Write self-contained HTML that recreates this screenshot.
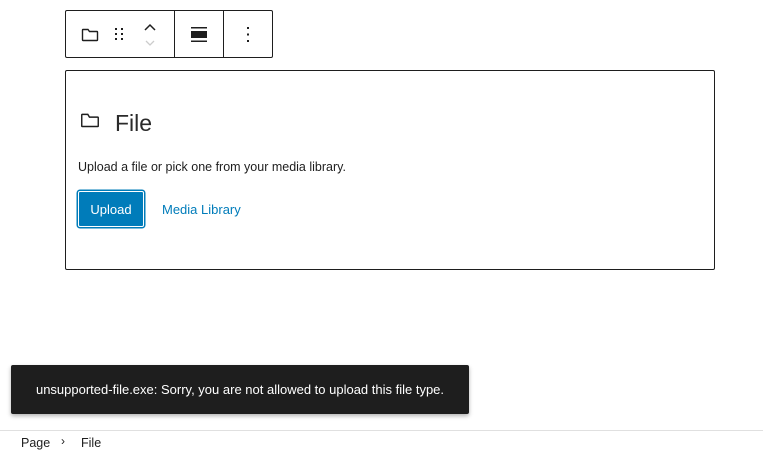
<!DOCTYPE html>
<html><head><style>
body{margin:0;width:763px;height:455px;background:#fff;font-family:"Liberation Sans",sans-serif;position:relative;overflow:hidden;color:#1e1e1e}
.tb{position:absolute;left:65px;top:10px;width:206px;height:46px;border:1px solid #1e1e1e;border-radius:2px;box-sizing:content-box}
.dv{position:absolute;top:0;width:1px;height:46px;background:#1e1e1e}
.blk{position:absolute;left:65px;top:70px;width:648px;height:198px;border:1px solid #1e1e1e;border-radius:2px}
.snack{position:absolute;left:11px;top:365px;width:458px;height:49px;background:#1e1e1e;border-radius:2px;color:#fff;font-size:13px;line-height:49px;text-align:center;box-shadow:0 2px 4px rgba(0,0,0,.3)}
.foot{position:absolute;left:0;top:430px;width:763px;border-top:1px solid #e0e0e0;height:25px}
</style></head><body>
<div class="tb">
<svg style="position:absolute;left:14px;top:14px" width="20" height="20" viewBox="0 0 20 20"><path d="M2.5 5.5v9.5a.5.5 0 0 0 .5.5h14a.5.5 0 0 0 .5-.5V7a.5.5 0 0 0-.5-.5H9.5L8 4.5H3a.5.5 0 0 0-.5.5z" fill="none" stroke="#1e1e1e" stroke-width="1.4"/></svg>
<svg style="position:absolute;left:48px;top:16px" width="12" height="14"><g fill="#1e1e1e"><rect x="1" y="1" width="2" height="2"/><rect x="7" y="1" width="2" height="2"/><rect x="1" y="6" width="2" height="2"/><rect x="7" y="6" width="2" height="2"/><rect x="1" y="11" width="2" height="2"/><rect x="7" y="11" width="2" height="2"/></g></svg>
<svg style="position:absolute;left:77px;top:11px" width="14" height="26"><path d="M2 8l5-5 5 5" fill="none" stroke="#1e1e1e" stroke-width="1.5"/><path d="M3 19l4 4 4-4" fill="none" stroke="#ccc" stroke-width="1.3"/></svg>
<div class="dv" style="left:108px"></div>
<svg style="position:absolute;left:125px;top:15px" width="16" height="18"><rect x="0" y="1" width="16" height="1.5" fill="#1e1e1e"/><rect x="0" y="5" width="16" height="7" fill="#1e1e1e"/><rect x="0" y="14.5" width="16" height="1.5" fill="#1e1e1e"/></svg>
<div class="dv" style="left:157px"></div>
<svg style="position:absolute;left:180px;top:15px" width="4" height="18"><g fill="#1e1e1e"><rect x="1" y="1" width="2" height="2"/><rect x="1" y="7.5" width="2" height="2"/><rect x="1" y="14" width="2" height="2"/></g></svg>
</div>
<div class="blk">
<svg style="position:absolute;left:12px;top:39px" width="24" height="22" viewBox="0 0 20 20"><path d="M2.5 5v9.5a.5.5 0 0 0 .5.5h14a.5.5 0 0 0 .5-.5V7a.5.5 0 0 0-.5-.5H9.5L8 4H3a.5.5 0 0 0-.5.5z" fill="none" stroke="#1e1e1e" stroke-width="1.3"/></svg>
<div style="position:absolute;left:49px;top:39px;font-size:23px;color:#2a2a2a">File</div>
<div style="position:absolute;left:12px;top:89px;font-size:12.5px;color:#1e1e1e">Upload a file or pick one from your media library.</div>
<div style="position:absolute;left:12px;top:120px;width:66px;height:36px;background:#007cba;border-radius:2px;box-shadow:inset 0 0 0 1px #fff,0 0 0 1.5px #007cba;color:#fff;font-size:13px;line-height:38px;text-align:center">Upload</div>
<div style="position:absolute;left:96px;top:131px;font-size:13px;color:#007cba">Media Library</div>
</div>
<div class="snack">unsupported-file.exe: Sorry, you are not allowed to upload this file type.</div>
<div class="foot"><span style="position:absolute;left:21px;top:5px;font-size:12.5px;color:#1e1e1e">Page</span><span style="position:absolute;left:61px;top:3px;font-size:12px">›</span><span style="position:absolute;left:81px;top:5px;font-size:12.5px;color:#1e1e1e">File</span></div>
</body></html>
